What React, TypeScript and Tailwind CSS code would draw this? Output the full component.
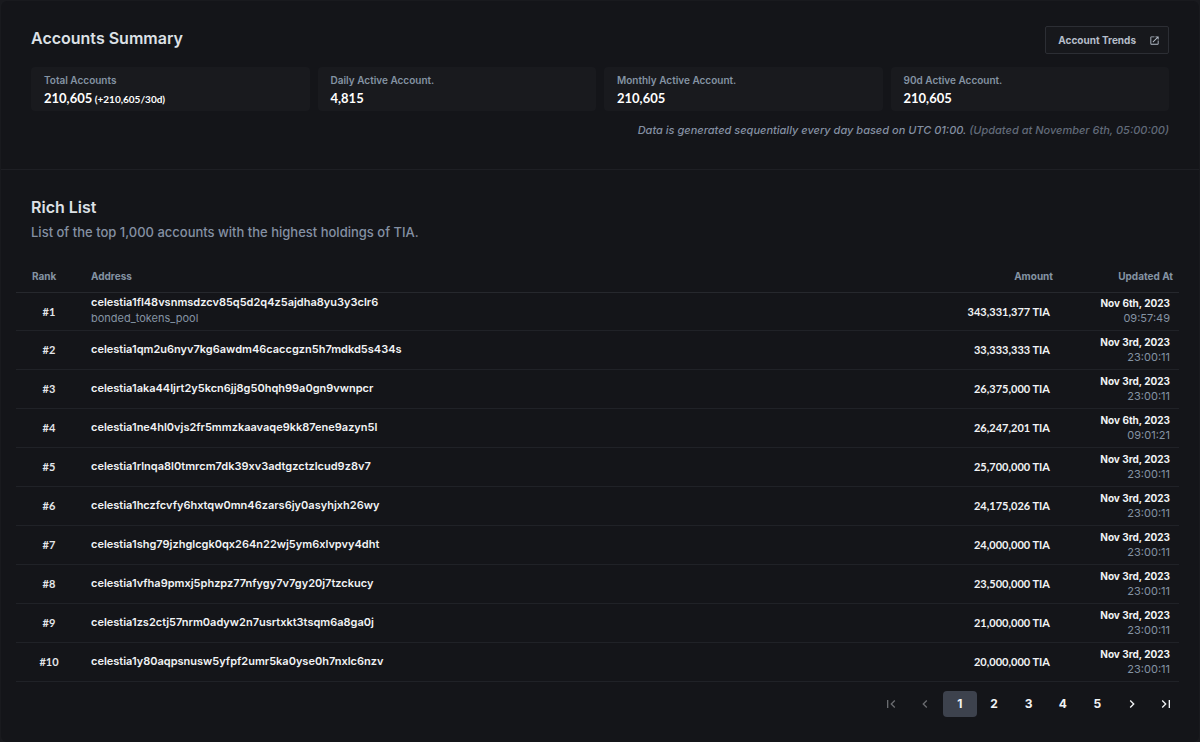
import { MdChevronLeft, MdChevronRight, MdFirstPage, MdLastPage, MdOpenInNew } from 'react-icons/md';

interface Stat {
  label: string;
  value: string;
  change?: string;
}

interface Account {
  address: string;
  name?: string;
  amount: string;
  date: string;
  time: string;
}

const STATS: Stat[] = [
  { label: 'Total Accounts', value: '210,605', change: '(+210,605/30d)' },
  { label: 'Daily Active Account.', value: '4,815' },
  { label: 'Monthly Active Account.', value: '210,605' },
  { label: '90d Active Account.', value: '210,605' },
];

const ACCOUNTS: Account[] = [
  { address: 'celestia1fl48vsnmsdzcv85q5d2q4z5ajdha8yu3y3clr6', name: 'bonded_tokens_pool', amount: '343,331,377', date: 'Nov 6th, 2023', time: '09:57:49' },
  { address: 'celestia1qm2u6nyv7kg6awdm46caccgzn5h7mdkd5s434s', amount: '33,333,333', date: 'Nov 3rd, 2023', time: '23:00:11' },
  { address: 'celestia1aka44ljrt2y5kcn6jj8g50hqh99a0gn9vwnpcr', amount: '26,375,000', date: 'Nov 3rd, 2023', time: '23:00:11' },
  { address: 'celestia1ne4hl0vjs2fr5mmzkaavaqe9kk87ene9azyn5l', amount: '26,247,201', date: 'Nov 6th, 2023', time: '09:01:21' },
  { address: 'celestia1rlnqa8l0tmrcm7dk39xv3adtgzctzlcud9z8v7', amount: '25,700,000', date: 'Nov 3rd, 2023', time: '23:00:11' },
  { address: 'celestia1hczfcvfy6hxtqw0mn46zars6jy0asyhjxh26wy', amount: '24,175,026', date: 'Nov 3rd, 2023', time: '23:00:11' },
  { address: 'celestia1shg79jzhglcgk0qx264n22wj5ym6xlvpvy4dht', amount: '24,000,000', date: 'Nov 3rd, 2023', time: '23:00:11' },
  { address: 'celestia1vfha9pmxj5phzpz77nfygy7v7gy20j7tzckucy', amount: '23,500,000', date: 'Nov 3rd, 2023', time: '23:00:11' },
  { address: 'celestia1zs2ctj57nrm0adyw2n7usrtxkt3tsqm6a8ga0j', amount: '21,000,000', date: 'Nov 3rd, 2023', time: '23:00:11' },
  { address: 'celestia1y80aqpsnusw5yfpf2umr5ka0yse0h7nxlc6nzv', amount: '20,000,000', date: 'Nov 3rd, 2023', time: '23:00:11' },
];

const PAGES = [1, 2, 3, 4, 5];

function AccountsSummary() {
  return (
    <section className="border-b border-[#1e1f24] px-[30px] pt-[25px] pb-[31px]">
      <div className="flex items-start justify-between">
        <h2 className="text-[16px] leading-6 font-semibold text-[#dde1e6]">Accounts Summary</h2>
        <a
          href="#trends"
          className="flex h-7 items-center gap-[13px] rounded-xs border border-[#2c2e34] bg-[#17181c] pr-2 pl-3 text-[10px] font-bold text-[#b5bdc9]"
        >
          Account Trends
          <MdOpenInNew size={11} />
        </a>
      </div>

      <div className="mt-[13px] grid grid-cols-4 gap-2">
        {STATS.map((stat) => (
          <div key={stat.label} className="h-11 rounded-sm bg-[#191a1e] px-[13px] pt-[5px]">
            <p className="text-[10px] leading-4 font-semibold text-[#8493a3]">{stat.label}</p>
            <p className="font-[Lato,sans-serif] text-[13px] leading-5 font-bold text-white">
              {stat.value}
              {stat.change && <span className="text-[10px]"> {stat.change}</span>}
            </p>
          </div>
        ))}
      </div>

      <p className="mt-[11px] text-right text-[11px] leading-4 font-medium text-[#8490a3] italic">
        Data is generated sequentially every day based on UTC 01:00.{' '}
        <span className="text-[#626b79]">(Updated at November 6th, 05:00:00)</span>
      </p>
    </section>
  );
}

function RichListTable() {
  return (
    <table className="w-full border-collapse text-[11px]">
      <thead>
        <tr className="h-[33px] border-b border-[#26282d] text-[10px] text-[#8493a3]">
          <th className="w-[75px] pt-0.5 pl-4 text-left font-bold">Rank</th>
          <th className="pt-0.5 text-left font-bold">Address</th>
          <th className="w-40 pt-0.5 pr-1.5 text-right font-bold">Amount</th>
          <th className="w-[120px] pt-0.5 pr-1.5 text-right font-bold">Updated At</th>
        </tr>
      </thead>
      <tbody>
        {ACCOUNTS.map((account, index) => (
          <tr key={account.address} className="h-[39px] border-b border-[#202227] first:h-[38px]">
            <td className="pt-0.5 pr-[9px] text-center font-[Lato,sans-serif] font-bold text-[#e3e6ea]">
              #{index + 1}
            </td>
            <td className="pb-0.5 leading-4">
              <a href={`#${account.address}`} className="block font-semibold text-[#f1f3f5]">
                {account.address}
              </a>
              {account.name && <span className="block text-[#8493a3]">{account.name}</span>}
            </td>
            <td className="pt-0.5 pr-[9px] text-right font-[Lato,sans-serif] font-bold text-[#f1f3f5]">
              {account.amount} TIA
            </td>
            <td className="pr-[9px] text-right leading-[15px]">
              <p className="text-[10px] font-bold text-[#f1f3f5]">{account.date}</p>
              <p className="text-[#8493a3]">{account.time}</p>
            </td>
          </tr>
        ))}
      </tbody>
    </table>
  );
}

function Pagination() {
  const button = 'flex h-[26px] w-[34px] items-center justify-center rounded-sm';

  return (
    <nav
      aria-label="Pagination"
      className="mt-[9px] ml-auto flex w-[309px] justify-between text-[12px] font-bold text-[#f1f3f5]"
    >
      <button aria-label="First page" className={`${button} text-[#6a6c70]`} disabled>
        <MdFirstPage size={16} />
      </button>
      <button aria-label="Previous page" className={`${button} text-[#6a6c70]`} disabled>
        <MdChevronLeft size={16} />
      </button>
      {PAGES.map((page) => (
        <button key={page} className={page === 1 ? `${button} bg-[#3d424d]` : button}>
          {page}
        </button>
      ))}
      <button aria-label="Next page" className={button}>
        <MdChevronRight size={16} />
      </button>
      <button aria-label="Last page" className={button}>
        <MdLastPage size={16} />
      </button>
    </nav>
  );
}

export default function App() {
  return (
    <div className="min-h-screen bg-[#191a1e] px-px pt-px font-[Inter,sans-serif]">
      <main className="min-h-[741px] rounded-md bg-[#141519]">
        <AccountsSummary />
        <section className="pt-[25px] pr-4 pb-6 pl-[15px]">
          <h2 className="px-[15px] text-[16px] leading-6 font-semibold text-[#dde1e6]">Rich List</h2>
          <p className="mt-[3px] mb-[17px] px-[15px] text-[13px] leading-5 font-medium text-[#8490a3]">
            List of the top 1,000 accounts with the highest holdings of TIA.
          </p>
          <div className="pr-1">
            <RichListTable />
          </div>
          <Pagination />
        </section>
      </main>
    </div>
  );
}
